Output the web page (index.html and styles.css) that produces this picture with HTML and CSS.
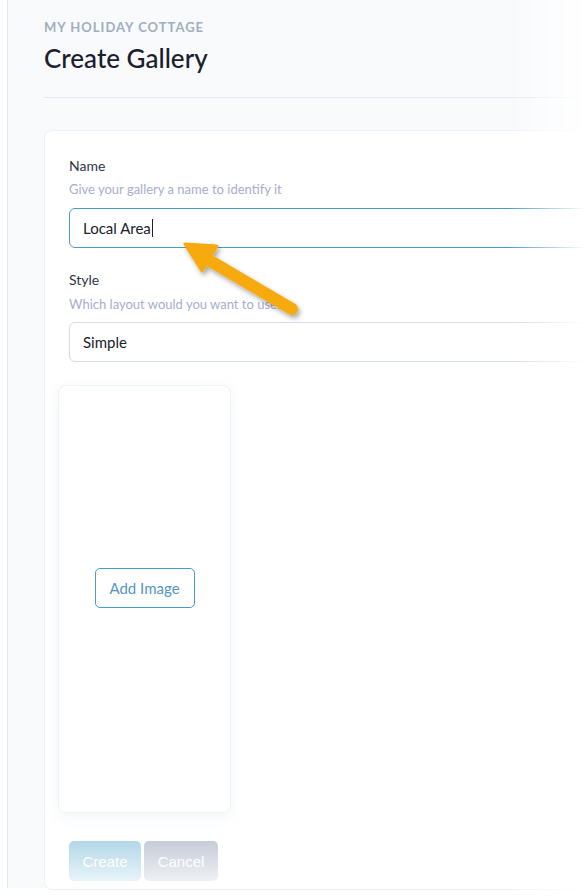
FILE: index.html
```html
<!DOCTYPE html>
<html>
<head>
<meta charset="utf-8">
<link rel="stylesheet" href="styles.css">
</head>
<body>
<div class="page">
  <div class="eyebrow">My Holiday Cottage</div>
  <h1 class="title">Create Gallery</h1>
  <div class="divider"></div>
  <div class="card">
    <div class="field">
      <div class="label">Name</div>
      <div class="help">Give your gallery a name to identify it</div>
      <div class="input focused">Local Area<span class="caret"></span></div>
    </div>
    <div class="field">
      <div class="label">Style</div>
      <div class="help">Which layout would you want to use?</div>
      <div class="input">Simple</div>
    </div>
    <div class="image-slot">
      <button class="add-btn">Add Image</button>
    </div>
    <div class="actions">
      <button class="btn create">Create</button>
      <button class="btn cancel">Cancel</button>
    </div>
  </div>
</div>
<div class="fade-right"></div>
<svg class="arrow" width="587" height="896" viewBox="0 0 587 896">
  <defs>
    <filter id="sh" x="-30%" y="-30%" width="160%" height="160%">
      <feDropShadow dx="2" dy="3" stdDeviation="2.5" flood-color="#000" flood-opacity="0.35"/>
    </filter>
  </defs>
  <g filter="url(#sh)" fill="#f7aa0f" stroke="#f7aa0f">
    <line x1="292" y1="309" x2="212" y2="262" stroke-width="12" stroke-linecap="round"/>
    <polygon points="185,244 217,246 202,271" stroke-width="3" stroke-linejoin="round"/>
  </g>
</svg>
</body>
</html>
```
FILE: styles.css
```css
html, body {
  margin: 0;
  padding: 0;
  background: #ffffff;
  overflow: hidden;
  width: 587px;
  height: 896px;
}
body {
  font-family: "Lato", "Liberation Sans", sans-serif;
  color: #1a202c;
  position: relative;
}
.page {
  margin-left: 7px;
  border-left: 1px solid #e2e8f0;
  background: #f8fafc;
  height: 888px;
  padding: 20px 0 0 36px;
  box-sizing: border-box;
}
.eyebrow {
  font-size: 13px;
  font-weight: 700;
  letter-spacing: 1px;
  text-transform: uppercase;
  color: #a0aec0;
  line-height: 15px;
}
.title {
  margin: 8px 0 0 0;
  font-size: 26px;
  font-weight: 500;
  line-height: 30px;
  color: #1a202c;
}
.divider {
  margin-top: 24px;
  height: 1px;
  background: #e2e8f0;
}
.card {
  margin-top: 32px;
  background: #ffffff;
  border: 1px solid #edf2f7;
  border-right: none;
  border-radius: 8px 0 0 8px;
  height: 760px;
  width: 600px;
  padding: 26px 0 0 24px;
  box-sizing: border-box;
}
.field {
  margin-bottom: 23px;
}
.label {
  font-size: 14px;
  line-height: 18px;
  color: #2d3748;
}
.help {
  margin-top: 6px;
  font-size: 13px;
  line-height: 16px;
  color: #a5aecd;
}
.field + .field .help {
  margin-top: 7px;
}
.field + .field .input {
  margin-top: 10px;
}
.input {
  margin-top: 11px;
  height: 40px;
  width: 560px;
  box-sizing: border-box;
  border: 1px solid #d5dce6;
  border-radius: 6px;
  padding: 0 13px;
  display: flex;
  align-items: center;
  font-size: 15px;
  color: #1a202c;
}
.input.focused {
  border-color: #4a9cc7;
}
.caret {
  display: inline-block;
  width: 1px;
  height: 18px;
  background: #1a202c;
  margin-left: 1px;
}
.image-slot {
  margin: 0 0 0 -11px;
  width: 173px;
  height: 428px;
  box-sizing: border-box;
  border: 1px solid #edf2f7;
  border-radius: 8px;
  box-shadow: 0 4px 14px rgba(160, 174, 200, 0.12);
  display: flex;
  align-items: center;
  justify-content: center;
}
.add-btn {
  font-family: "Lato", "Liberation Sans", sans-serif;
  font-size: 15px;
  color: #5296c4;
  background: #ffffff;
  border: 1px solid #4a9cc7;
  border-radius: 5px;
  width: 100px;
  height: 40px;
  padding: 0;
  margin-bottom: 22px;
}
.actions {
  display: flex;
  gap: 3px;
  margin-top: 28px;
}
.btn {
  font-family: "Liberation Sans", sans-serif;
  font-size: 15px;
  color: #ffffff;
  border: none;
  border-radius: 5px;
  height: 40px;
  padding: 0;
}
.create {
  width: 72px;
  background: linear-gradient(#b3d7e7, #e8f4f9);
}
.cancel {
  width: 74px;
  background: linear-gradient(#c7ccd8, #eef0f4);
}
.fade-right {
  position: absolute;
  top: 0;
  right: 0;
  width: 80px;
  height: 896px;
  background: linear-gradient(to right, rgba(255,255,255,0), #ffffff);
  pointer-events: none;
}
.arrow {
  position: absolute;
  top: 0;
  left: 0;
  pointer-events: none;
}
```
